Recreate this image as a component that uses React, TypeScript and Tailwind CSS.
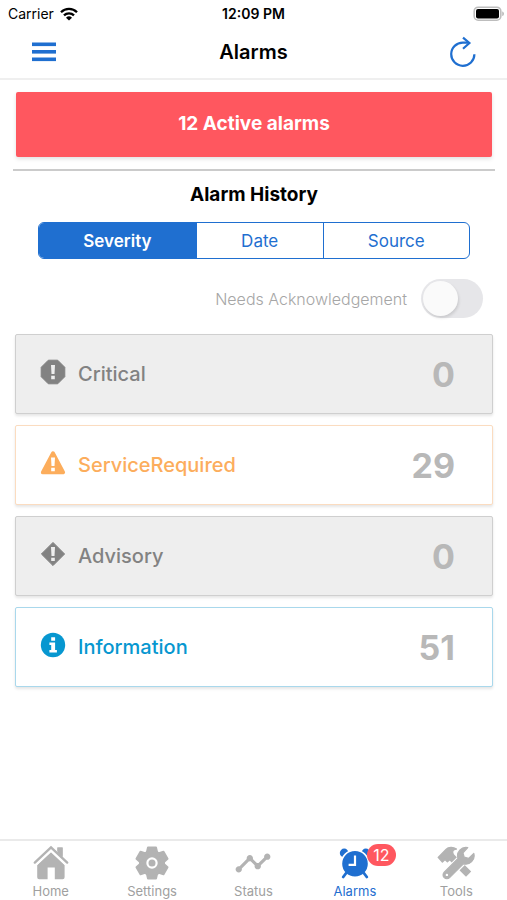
import { useState } from "react";
import type { ReactNode } from "react";
import clsx from "clsx";
import { MdTimeline } from "react-icons/md";

const WifiIcon = () => (
  <svg width="18" height="14" viewBox="0 0 18 14" fill="none" stroke="#000" strokeWidth="2.3" aria-hidden="true">
    <path d="M1 5.2a11.4 11.4 0 0 1 16 0" />
    <path d="M4 8.4a7.1 7.1 0 0 1 10 0" />
    <path d="M9 13.6 6 10.7a4.3 4.3 0 0 1 6 0Z" fill="#000" stroke="none" />
  </svg>
);

const BatteryIcon = () => (
  <svg width="32" height="16" viewBox="0 0 32 16" aria-hidden="true">
    <rect x="1.2" y="1.2" width="26.6" height="13" rx="4" fill="#fff" stroke="#bdbdbd" strokeWidth="1.6" />
    <rect x="3" y="3" width="23" height="9.4" rx="2" fill="#000" />
    <path d="M29.4 5.4c1.8.6 1.8 4 0 4.6Z" fill="#a8a8a8" />
  </svg>
);

const MenuIcon = () => (
  <svg width="24" height="20" viewBox="0 0 24 20" fill="currentColor" aria-hidden="true">
    <rect y="0.5" width="24" height="3.6" />
    <rect y="8" width="24" height="3.6" />
    <rect y="15.5" width="24" height="3.6" />
  </svg>
);

const RefreshIcon = () => (
  <svg width="26" height="32" viewBox="0 0 26 32" fill="none" stroke="currentColor" strokeWidth="2.2" aria-hidden="true">
    <path d="M24.4 18.2A11.6 11.6 0 1 1 13 6.6h5.4" />
    <path d="m13 1.6 6.4 5.4-6.4 5.8" />
  </svg>
);

const CriticalIcon = () => (
  <svg width="26" height="26" viewBox="0 0 26 26" aria-hidden="true">
    <path d="M8.3 1.2h9.4l7.1 7.1v9.4l-7.1 7.1H8.3l-7.1-7.1V8.3Z" fill="currentColor" stroke="currentColor" strokeLinejoin="round" />
    <path d="M11 6h4l-.5 9h-3ZM11.2 16.8h3.6v3.4h-3.6Z" fill="#eee" />
  </svg>
);

const WarningIcon = () => (
  <svg width="26" height="26" viewBox="0 0 26 26" aria-hidden="true">
    <path d="M13 3.2 23.2 22.4H2.8Z" fill="currentColor" stroke="currentColor" strokeWidth="3.8" strokeLinejoin="round" />
    <path d="M11 7.6h4l-.5 8.4h-3ZM11.2 17.8h3.6v3.4h-3.6Z" fill="#fff" />
  </svg>
);

const AdvisoryIcon = () => (
  <svg width="26" height="26" viewBox="0 0 26 26" aria-hidden="true">
    <path d="M13 1.4 24.6 13 13 24.6 1.4 13Z" fill="currentColor" stroke="currentColor" strokeLinejoin="round" />
    <path d="M11 6h4l-.5 9h-3ZM11.2 16.8h3.6v3.2h-3.6Z" fill="#eee" />
  </svg>
);

const InfoIcon = () => (
  <svg width="26" height="26" viewBox="0 0 26 26" aria-hidden="true">
    <circle cx="13" cy="13" r="12.2" fill="currentColor" />
    <path d="M11.2 5.2h3.9v3.6h-3.9ZM9.4 10.6h5.7v7.4h1.8v2.5H9.4V18h1.8v-4.9H9.4Z" fill="#fff" />
  </svg>
);

const HomeIcon = () => (
  <svg width="36" height="36" viewBox="0 0 36 36" aria-hidden="true">
    <path d="M18 7.2 31.6 20v12.2a2 2 0 0 1-2 2h-7.8V22.6h-7.2v11.6H6.2a2 2 0 0 1-2-2V20Z" fill="currentColor" />
    <path d="M24.4 2.4h5.2v12l-5.2-4.8Z" fill="currentColor" />
    <path d="M2 18.6 18 3.4l16 15.2" fill="none" stroke="#fff" strokeWidth="5" />
    <path d="M24.4 2.4h5.2v9.8l-5.2-4.8Z" fill="currentColor" />
    <path d="M1.8 17.6 18 2.4l16.2 15.2" fill="none" stroke="currentColor" strokeWidth="2.4" strokeLinecap="round" />
  </svg>
);

const GearIcon = () => (
  <svg width="36" height="36" viewBox="0 0 36 36" aria-hidden="true">
    <g fill="currentColor" stroke="currentColor" strokeWidth="2" strokeLinejoin="round">
      <circle cx="18" cy="18" r="12" />
      {[0, 60, 120, 180, 240, 300].map((angle) => (
        <path key={angle} d="M14 2.4h8l1.6 7H12.4Z" transform={`rotate(${angle} 18 18)`} />
      ))}
    </g>
    <circle cx="18" cy="18" r="4.6" fill="currentColor" stroke="#fff" strokeWidth="2.2" />
  </svg>
);

const AlarmIcon = () => (
  <svg width="36" height="36" viewBox="0 0 36 36" aria-hidden="true">
    <g fill="currentColor">
      <circle cx="7.2" cy="8" r="4.4" />
      <circle cx="28.8" cy="8" r="4.4" />
    </g>
    <circle cx="18" cy="18.8" r="13.6" fill="currentColor" stroke="#fff" strokeWidth="1.6" />
    <path d="m9.2 28-3 4M26.8 28l3 4" stroke="currentColor" strokeWidth="2.8" strokeLinecap="round" />
    <path d="M18 10.6v9.2h-6.4" fill="none" stroke="#fff" strokeWidth="2.2" />
  </svg>
);

const ToolsIcon = () => (
  <svg width="38" height="36" viewBox="0 0 38 36" aria-hidden="true">
    <path d="m13 10.6 18.6 18.6" stroke="currentColor" strokeWidth="7.4" />
    <path d="M1.2 12.4 9 4.4c2.4-2.4 7.2-2.6 10.4-.4-2.6.4-3.8 1.4-3.8 3.2l.8 4-6 5.6-2.4-2.2-2.6 2.4Z" fill="currentColor" stroke="currentColor" strokeWidth="1.4" strokeLinejoin="round" />
    <path d="M12 28 25 15" stroke="#fff" strokeWidth="11" />
    <path
      d="M30.8 2.6a8.4 8.4 0 0 0-9.8 10.8L7.2 27.2a3.8 3.8 0 0 0 5.4 5.4l13.8-13.8A8.4 8.4 0 0 0 36.8 8.4l-5.2 5-4.4-1.2-1.2-4.4Z"
      fill="currentColor"
      stroke="currentColor"
      strokeWidth="1.2"
      strokeLinejoin="round"
    />
    <circle cx="9.9" cy="29.9" r="1.2" fill="#fff" />
  </svg>
);

interface Severity {
  name: string;
  count: number;
  icon: ReactNode;
  card: string;
}

const severities: Severity[] = [
  { name: "Critical", count: 0, icon: <CriticalIcon />, card: "bg-[#eeeeee] border-[#cfcfcf] text-[#828282]" },
  { name: "ServiceRequired", count: 29, icon: <WarningIcon />, card: "bg-white border-[#fbdcc0] text-[#fcad5c]" },
  { name: "Advisory", count: 0, icon: <AdvisoryIcon />, card: "bg-[#eeeeee] border-[#cfcfcf] text-[#828282]" },
  { name: "Information", count: 51, icon: <InfoIcon />, card: "bg-white border-[#a9d8ec] text-[#0797d0]" },
];

const groupings = ["Severity", "Date", "Source"];

const tabs = [
  { name: "Home", icon: <HomeIcon /> },
  { name: "Settings", icon: <GearIcon /> },
  { name: "Status", icon: <MdTimeline size={38} /> },
  { name: "Alarms", icon: <AlarmIcon />, badge: 12 },
  { name: "Tools", icon: <ToolsIcon /> },
];

export default function App() {
  const [grouping, setGrouping] = useState("Severity");
  const activeTab = "Alarms";

  return (
    <div className="min-h-screen bg-white flex flex-col font-['Inter',sans-serif] text-black">
      {/* Status bar */}
      <div className="grid grid-cols-3 items-center h-7 px-2 text-sm">
        <div className="flex items-center gap-1.5">
          <span>Carrier</span>
          <WifiIcon />
        </div>
        <span className="text-center font-semibold">12:09 PM</span>
        <div className="flex justify-end -mr-1.5">
          <BatteryIcon />
        </div>
      </div>

      <header className="grid grid-cols-3 items-center h-13 px-8 pb-0.5 border-b-2 border-[#efefef]">
        <button aria-label="Menu" className="justify-self-start text-[#1f6fd0]">
          <MenuIcon />
        </button>
        <h1 className="text-center text-xl font-semibold">Alarms</h1>
        <button aria-label="Refresh" className="justify-self-end -mr-px text-[#1f6fd0]">
          <RefreshIcon />
        </button>
      </header>

      <main className="flex-1 flex flex-col pt-3 pl-[15px] pr-3.5">
        <button className="h-[65px] mx-px rounded-xs bg-[#ff575f] text-white text-[19px] font-bold shadow-[0_2px_4px_rgba(0,0,0,0.12)]">
          12 Active alarms
        </button>

        <hr className="mt-3 -mx-0.5 border-t-2 border-[#cbcbcb]" />

        <h2 className="mt-2.5 text-center text-[19px] leading-7 font-bold">Alarm History</h2>

        <div className="flex mt-[13px] mx-[23px] h-[37px] rounded-md border border-[#1f6fd0] overflow-hidden">
          {groupings.map((name) => (
            <button
              key={name}
              onClick={() => setGrouping(name)}
              className={clsx(
                "flex-auto pt-0.5 border-l border-[#1f6fd0] first:border-l-0 text-[17px]",
                grouping === name ? "bg-[#1f6fd0] text-white font-semibold" : "text-[#1f6fd0]"
              )}
            >
              {name}
            </button>
          ))}
        </div>

        <label className="flex items-center justify-end gap-3.5 mt-5 mr-2.5 text-base font-light text-[#a6a6a6]">
          Needs Acknowledgement
          <input
            type="checkbox"
            role="switch"
            className="appearance-none w-[62px] h-[39px] p-0.5 rounded-full bg-[#e6e6e9] before:block before:size-[35px] before:rounded-full before:bg-[#fafafa] before:shadow-[1px_2px_3px_rgba(0,0,0,0.12)] checked:bg-[#1f6fd0] checked:before:ml-[23px]"
          />
        </label>

        <div className="flex flex-col gap-[11px] mt-4 pb-4">
          {severities.map(({ name, count, icon, card }) => (
            <button
              key={name}
              className={clsx("flex items-center h-20 pl-6 pr-[37px] rounded-xs border shadow-[0_2px_3px_rgba(0,0,0,0.1)]", card)}
            >
              <span className="mb-1">{icon}</span>
              <span className="ml-3 text-xl font-medium">{name}</span>
              <span className="ml-auto text-[34px] font-bold text-[#b8b8b8]">{count}</span>
            </button>
          ))}
        </div>
      </main>

      {/* Tab bar */}
      <nav className="grid grid-cols-5 h-[61px] border-t-2 border-[#eaeaea]">
        {tabs.map(({ name, icon, badge }) => (
          <a
            key={name}
            href={`#${name.toLowerCase()}`}
            className={clsx("flex flex-col items-center pt-1", name === activeTab ? "text-[#1f6fd0]" : "text-[#b3b3b3]")}
          >
            <span className="relative flex items-center justify-center h-9">
              {icon}
              {badge && (
                <span className="absolute left-[30px] -top-px w-[29px] rounded-full bg-[#ff575f] text-white text-center text-base leading-[22px]">
                  {badge}
                </span>
              )}
            </span>
            <span className={clsx("mt-0.5 text-[13px] leading-4", name !== activeTab && "text-[#a0a0a0]")}>{name}</span>
          </a>
        ))}
      </nav>
    </div>
  );
}
